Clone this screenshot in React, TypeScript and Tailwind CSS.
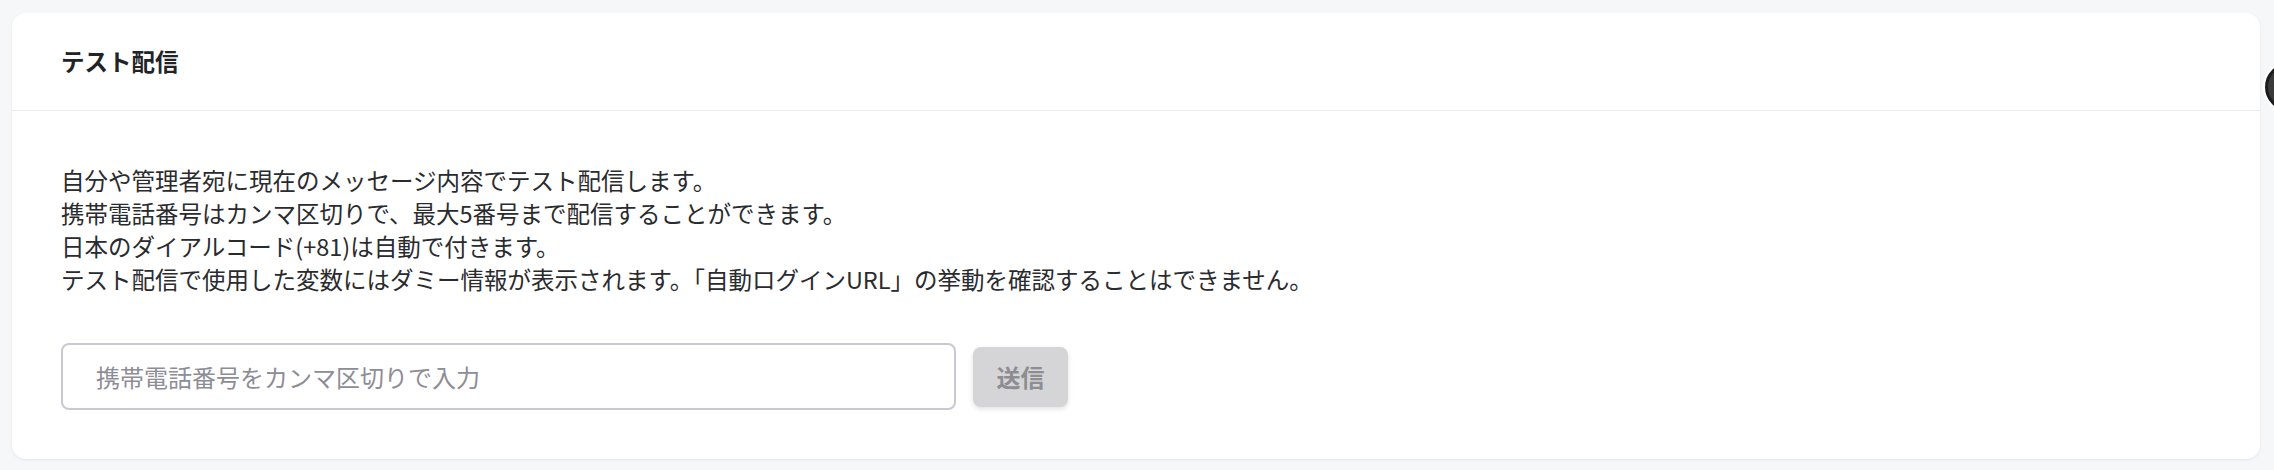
import { useState } from 'react';

const lines = [
  '自分や管理者宛に現在のメッセージ内容でテスト配信します。',
  '携帯電話番号はカンマ区切りで、最大5番号まで配信することができます。',
  '日本のダイアルコード(+81)は自動で付きます。',
  'テスト配信で使用した変数にはダミー情報が表示されます。「自動ログインURL」の挙動を確認することはできません。',
];

export default function App() {
  const [phones, setPhones] = useState('');

  return (
    <div
      className="relative min-h-[470px] w-full overflow-hidden bg-[#f6f7f9] pt-[13px] pl-[12px] pr-[14px]"
      style={{ fontFamily: '"Noto Sans CJK JP", "Noto Sans", sans-serif' }}
    >
      <div className="rounded-[14px] bg-white shadow-[0_1px_3px_rgba(0,0,0,0.08)]">
        <div className="flex h-[98px] items-center border-b border-[#ececef] px-[49px]">
          <h2 className="text-[23.5px] font-bold text-[#222326]">テスト配信</h2>
        </div>

        <div className="px-[49px] pt-[53px] pb-[49px]">
          <div className="text-[23.5px] leading-[33px] text-[#2a2b2e]">
            {lines.map((line) => (
              <p key={line}>{line}</p>
            ))}
          </div>

          <div className="mt-[47px] flex items-center gap-[17px]">
            <input
              value={phones}
              onChange={(e) => setPhones(e.target.value)}
              placeholder="携帯電話番号をカンマ区切りで入力"
              className="h-[67px] w-[895px] rounded-[8px] border-2 border-[#c9c8d3] px-[33px] text-[24px] text-[#2a2b2e] outline-none placeholder:text-[#8d8d96]"
            />
            <button
              disabled
              className="h-[60px] w-[95px] rounded-[8px] bg-[#d5d5d8] text-[24px] font-bold text-[#8e8e92] shadow-[0_2px_5px_rgba(0,0,0,0.12)]"
            >
              送信
            </button>
          </div>
        </div>
      </div>

      {/* floating button cut off at the right edge */}
      <div className="absolute top-[63px] left-[2265px] h-[48px] w-[48px] rounded-full border-[3px] border-[#1b1b1b] bg-[#3a3a3a] shadow-[0_0_0_2px_#ffffff]" />
    </div>
  );
}
